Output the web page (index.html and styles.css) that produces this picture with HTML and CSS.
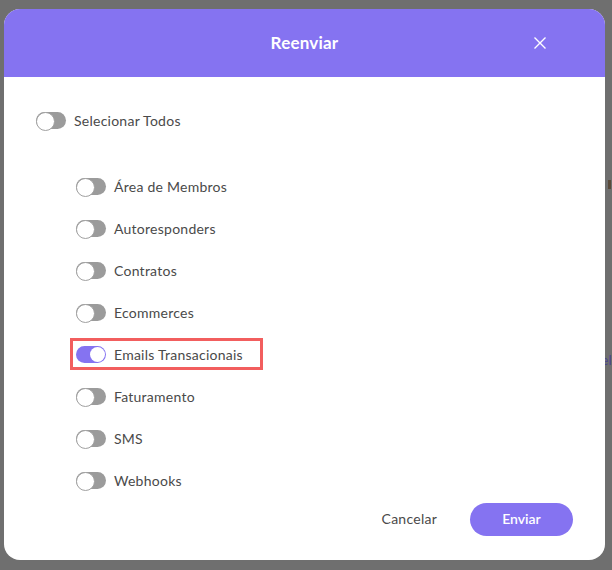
FILE: index.html
```html
<!DOCTYPE html>
<html lang="pt">
<head>
<meta charset="utf-8">
<link rel="stylesheet" href="styles.css">
</head>
<body>
<div class="backdrop-text">el</div>
<div class="backdrop-mark"></div>
<div class="modal">
  <div class="modal-header">
    <span class="modal-title">Reenviar</span>
    <button class="close" aria-label="Fechar">
      <svg width="12" height="12" viewBox="0 0 12 12"><path d="M0.5 0.5 L11.5 11.5 M11.5 0.5 L0.5 11.5" stroke="#fff" stroke-width="1.4" fill="none"/></svg>
    </button>
  </div>
  <div class="modal-body">
    <label class="row"><span class="toggle"></span><span>Selecionar Todos</span></label>
    <div class="list">
      <label class="row"><span class="toggle"></span><span>Área de Membros</span></label>
      <label class="row"><span class="toggle"></span><span>Autoresponders</span></label>
      <label class="row"><span class="toggle"></span><span>Contratos</span></label>
      <label class="row"><span class="toggle"></span><span>Ecommerces</span></label>
      <label class="row highlight"><span class="toggle on"></span><span>Emails Transacionais</span></label>
      <label class="row"><span class="toggle"></span><span>Faturamento</span></label>
      <label class="row"><span class="toggle"></span><span>SMS</span></label>
      <label class="row"><span class="toggle"></span><span>Webhooks</span></label>
    </div>
  </div>
  <div class="modal-footer">
    <button class="btn-cancel">Cancelar</button>
    <button class="btn-send">Enviar</button>
  </div>
</div>
</body>
</html>
```
FILE: styles.css
```css
* { box-sizing: border-box; }
html, body { margin: 0; padding: 0; }
body {
  width: 612px;
  height: 570px;
  background: #6f6f6f;
  font-family: "Lato", "Noto Sans", sans-serif;
  position: relative;
  overflow: hidden;
}
.backdrop-text {
  position: absolute;
  left: 601px;
  top: 351px;
  font-size: 14px;
  color: #4b4690;
}
.backdrop-mark {
  position: absolute;
  left: 608px;
  top: 180px;
  width: 3px;
  height: 9px;
  background: #5a4a3a;
}
.modal {
  position: relative;
  margin: 9px 7px 0 4px;
  width: 601px;
  height: 551px;
  background: #fff;
  border-radius: 16px;
  overflow: hidden;
  display: flex;
  flex-direction: column;
}
.modal-header {
  height: 68px;
  background: #8573f1;
  display: flex;
  align-items: center;
  justify-content: center;
  position: relative;
  padding-bottom: 2px;
}
.modal-title {
  color: #fff;
  font-size: 17px;
  font-weight: 700;
  letter-spacing: 0.2px;
}
.close {
  position: absolute;
  left: 530px;
  top: 28px;
  width: 12px;
  height: 12px;
  padding: 0;
  border: 0;
  background: none;
  display: flex;
}
.modal-body {
  padding: 33px 0 0 32px;
  flex: 1;
}
.row {
  display: flex;
  align-items: center;
  gap: 8px;
  height: 20px;
  font-size: 14px;
  letter-spacing: 0.25px;
  color: #4a4a4a;
}
.list {
  margin-top: 46px;
  padding-left: 40px;
  display: flex;
  flex-direction: column;
  align-items: flex-start;
  gap: 22px;
}
.toggle {
  position: relative;
  width: 30px;
  height: 17px;
  border-radius: 9px;
  background: #9b9b9b;
  flex: none;
}
.toggle::after {
  content: "";
  position: absolute;
  left: 0;
  top: 0;
  width: 17px;
  height: 17px;
  border-radius: 50%;
  background: #fff;
  border: 1px solid #a0a0a0;
}
.toggle.on { background: #8573f1; }
.toggle.on::after {
  left: auto;
  right: 1px;
  top: 1px;
  width: 15px;
  height: 15px;
  border: 0;
}
.highlight {
  height: 32px;
  border: 3px solid #f25e5e;
  padding: 3px 17px 3px 3px;
  margin: -6px -20px -6px -6px;
}
.modal-footer {
  display: flex;
  justify-content: flex-end;
  align-items: center;
  gap: 33px;
  padding: 0 32px 24px 0;
}
.btn-cancel {
  border: 0;
  background: none;
  padding: 0 0 2px;
  font-family: inherit;
  font-size: 14px;
  letter-spacing: 0.25px;
  color: #4a4a4a;
}
.btn-send {
  width: 103px;
  height: 33px;
  border: 0;
  border-radius: 17px;
  background: #8573f1;
  color: #fff;
  font-family: inherit;
  font-size: 14px;
  font-weight: 600;
  padding-bottom: 3px;
}
```
